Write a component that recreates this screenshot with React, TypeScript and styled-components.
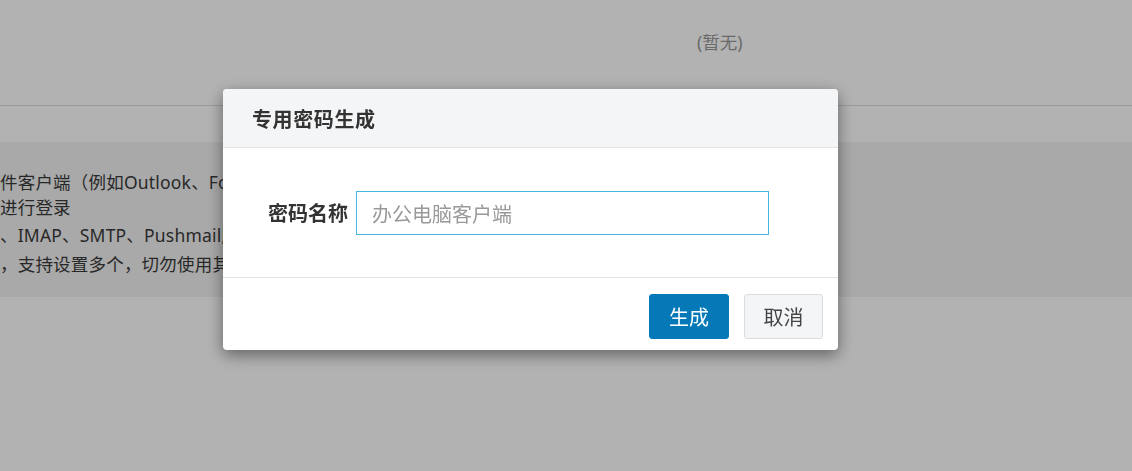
import { createGlobalStyle, styled } from "styled-components";

const GlobalStyle = createGlobalStyle`
    html, body {
        margin: 0;
        background: #ffffff;
        font-family: "Noto Sans", "Noto Sans CJK SC", sans-serif;
        overflow: hidden;
    }
`;

const Page = styled.div`
    width: 1132px;
    height: 471px;
`;

const InfoRow = styled.div`
    display: grid;
    grid-template-columns: 697px 1fr;
    height: 106px;
    box-sizing: border-box;
    padding-top: 30px;
    border-bottom: 1px solid #dcdcdc;
    font-size: 17.5px;
    line-height: 25px;
    color: #999999;
`;

const NoticeBand = styled.div`
    margin-top: 36px;
    height: 155px;
    box-sizing: border-box;
    padding-top: 28px;
    background: #f2f2f2;
    color: #3a3a3a;
    font-size: 17.5px;
    line-height: 25px;
    white-space: nowrap;
    letter-spacing: 0.2px;
`;

const NoticeLine = styled.p<{ $gap?: number }>`
    margin: ${(p) => p.$gap ?? 0}px 0 0;
`;

const Mask = styled.div`
    position: fixed;
    inset: 0;
    background: rgba(0, 0, 0, 0.3);
`;

const Dialog = styled.div`
    position: fixed;
    top: 89px;
    left: 223px;
    width: 615px;
    background: #ffffff;
    border-radius: 4px;
    overflow: hidden;
    box-shadow: 0 5px 16px rgba(0, 0, 0, 0.45);
    font-family: "Noto Sans CJK SC", "Noto Sans", sans-serif;
    color: #333333;
`;

const DialogHeader = styled.div`
    height: 58px;
    display: flex;
    align-items: center;
    padding-left: 29px;
    background: #f4f5f7;
    border-bottom: 1px solid #e3e3e3;
`;

const DialogTitle = styled.h3`
    margin: 0;
    font-size: 20px;
    font-weight: 700;
    letter-spacing: 0.6px;
`;

const DialogBody = styled.div`
    padding: 43px 0 42px 45px;
`;

const FieldRow = styled.div`
    display: flex;
    align-items: center;
    gap: 8px;
`;

const FieldLabel = styled.label`
    font-size: 20px;
    font-weight: 700;
    line-height: 44px;
`;

const TextInput = styled.input`
    width: 413px;
    height: 44px;
    box-sizing: border-box;
    padding: 0 15px;
    border: 1px solid #4ab5dc;
    outline: none;
    font-family: inherit;
    font-size: 20px;
    color: #333333;

    &::placeholder {
        color: #999999;
    }
`;

const DialogFooter = styled.div`
    display: flex;
    justify-content: flex-end;
    gap: 15px;
    padding: 16px 15px 11px;
    border-top: 1px solid #e3e3e3;
`;

const Button = styled.button<{ $primary?: boolean }>`
    height: 45px;
    width: ${(p) => (p.$primary ? 80 : 79)}px;
    box-sizing: border-box;
    border-radius: 3px;
    border: 1px solid ${(p) => (p.$primary ? "#0579b8" : "#dcdcdc")};
    background: ${(p) => (p.$primary ? "#0579b8" : "#f4f5f7")};
    color: ${(p) => (p.$primary ? "#ffffff" : "#444444")};
    font-family: inherit;
    font-size: 20px;
    padding: 0;
    cursor: pointer;
`;

const App = () => {
    return (
        <>
            <GlobalStyle />
            <Page>
                <InfoRow>
                    <span />
                    <span>(暂无)</span>
                </InfoRow>
                <NoticeBand>
                    <NoticeLine>件客户端（例如Outlook、Foxmail等）</NoticeLine>
                    <NoticeLine>进行登录</NoticeLine>
                    <NoticeLine $gap={3}>、IMAP、SMTP、Pushmail服务</NoticeLine>
                    <NoticeLine $gap={4}>，支持设置多个，切勿使用其他</NoticeLine>
                </NoticeBand>
            </Page>
            <Mask />
            <Dialog>
                <DialogHeader>
                    <DialogTitle>专用密码生成</DialogTitle>
                </DialogHeader>
                <DialogBody>
                    <FieldRow>
                        <FieldLabel>密码名称</FieldLabel>
                        <TextInput placeholder="办公电脑客户端" />
                    </FieldRow>
                </DialogBody>
                <DialogFooter>
                    <Button $primary>生成</Button>
                    <Button>取消</Button>
                </DialogFooter>
            </Dialog>
        </>
    );
};

export default App;
